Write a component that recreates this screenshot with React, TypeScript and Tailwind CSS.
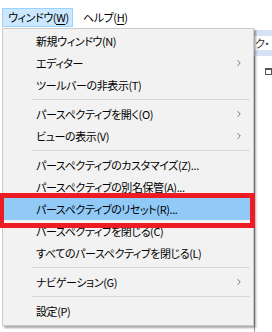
import { ChevronRight } from "lucide-react";

type Entry = { label: string; sub?: boolean; active?: boolean } | "sep";

const entries: Entry[] = [
  { label: "新規ウィンドウ(N)" },
  { label: "エディター", sub: true },
  { label: "ツールバーの非表示(T)" },
  "sep",
  { label: "パースペクティブを開く(O)", sub: true },
  { label: "ビューの表示(V)", sub: true },
  "sep",
  { label: "パースペクティブのカスタマイズ(Z)..." },
  { label: "パースペクティブの別名保管(A)..." },
  { label: "パースペクティブのリセット(R)...", active: true },
  { label: "パースペクティブを閉じる(C)" },
  { label: "すべてのパースペクティブを閉じる(L)" },
  "sep",
  { label: "ナビゲーション(G)", sub: true },
  "sep",
  { label: "設定(P)" },
];

export default function App() {
  return (
    <div className="relative w-[272px] h-[332px] overflow-hidden bg-white text-[11px] tracking-[-0.4px] text-black font-['Noto_Sans_CJK_JP','Noto_Sans',sans-serif] [font-feature-settings:'palt']">
      {/* menu bar */}
      <div className="flex h-[28px] items-start pt-[8px] pl-[2px]">
        <div className="flex h-[19px] w-[71px] items-center whitespace-nowrap border border-[#99d1ff] bg-[#cce8ff] pl-[5px] leading-none">
          ウィンドウ(<span className="underline underline-offset-2">W</span>)
        </div>
        <div className="flex h-[19px] items-center whitespace-nowrap pl-[10px] leading-none">
          ヘルプ(<span className="underline underline-offset-2">H</span>)
        </div>
      </div>

      {/* workbench behind the menu */}
      <div className="flex h-[304px]">
        <div className="w-[256px]" />
        <div className="flex flex-1 flex-col">
          <div className="mt-[2px] h-[26px] border-y-[6px] border-[#d5e3f4] bg-white">
            <div className="flex h-full items-center overflow-hidden whitespace-nowrap pl-[1px] leading-none text-[#333]">ク・</div>
          </div>
          <div className="flex flex-1 border-l border-[#a0a0a0]">
            <div className="ml-[10px] mt-[12px] h-[7px] w-[7px] border border-t-2 border-[#555]" />
          </div>
        </div>
      </div>

      {/* dropdown */}
      <div className="absolute left-[2px] top-[28px] w-[252px] border border-[#cccccc] bg-[#f2f2f2] pt-[1px] pb-[3px] shadow-[2px_2px_2px_rgba(0,0,0,0.35)]">
        {entries.map((e, i) =>
          e === "sep" ? (
            <div key={i} className="flex h-[7px] items-center pl-[29px] pr-[3px]">
              <div className="h-px w-full bg-[#d7d7d7]" />
            </div>
          ) : (
            <div
              key={i}
              className={`flex h-[22px] items-center pl-[33px] pr-[9px] leading-none ${e.active ? "bg-[#91c9f7]" : ""}`}
            >
              <span className="flex-1 whitespace-nowrap">{e.label}</span>
              {e.sub && <ChevronRight size={10} strokeWidth={1.6} className="text-[#333]" />}
            </div>
          )
        )}
      </div>

      {/* red annotation frame */}
      <div className="absolute left-[-1px] top-[193px] h-[35px] w-[256px] border-[5px] border-[#ed1c24]" />
    </div>
  );
}
